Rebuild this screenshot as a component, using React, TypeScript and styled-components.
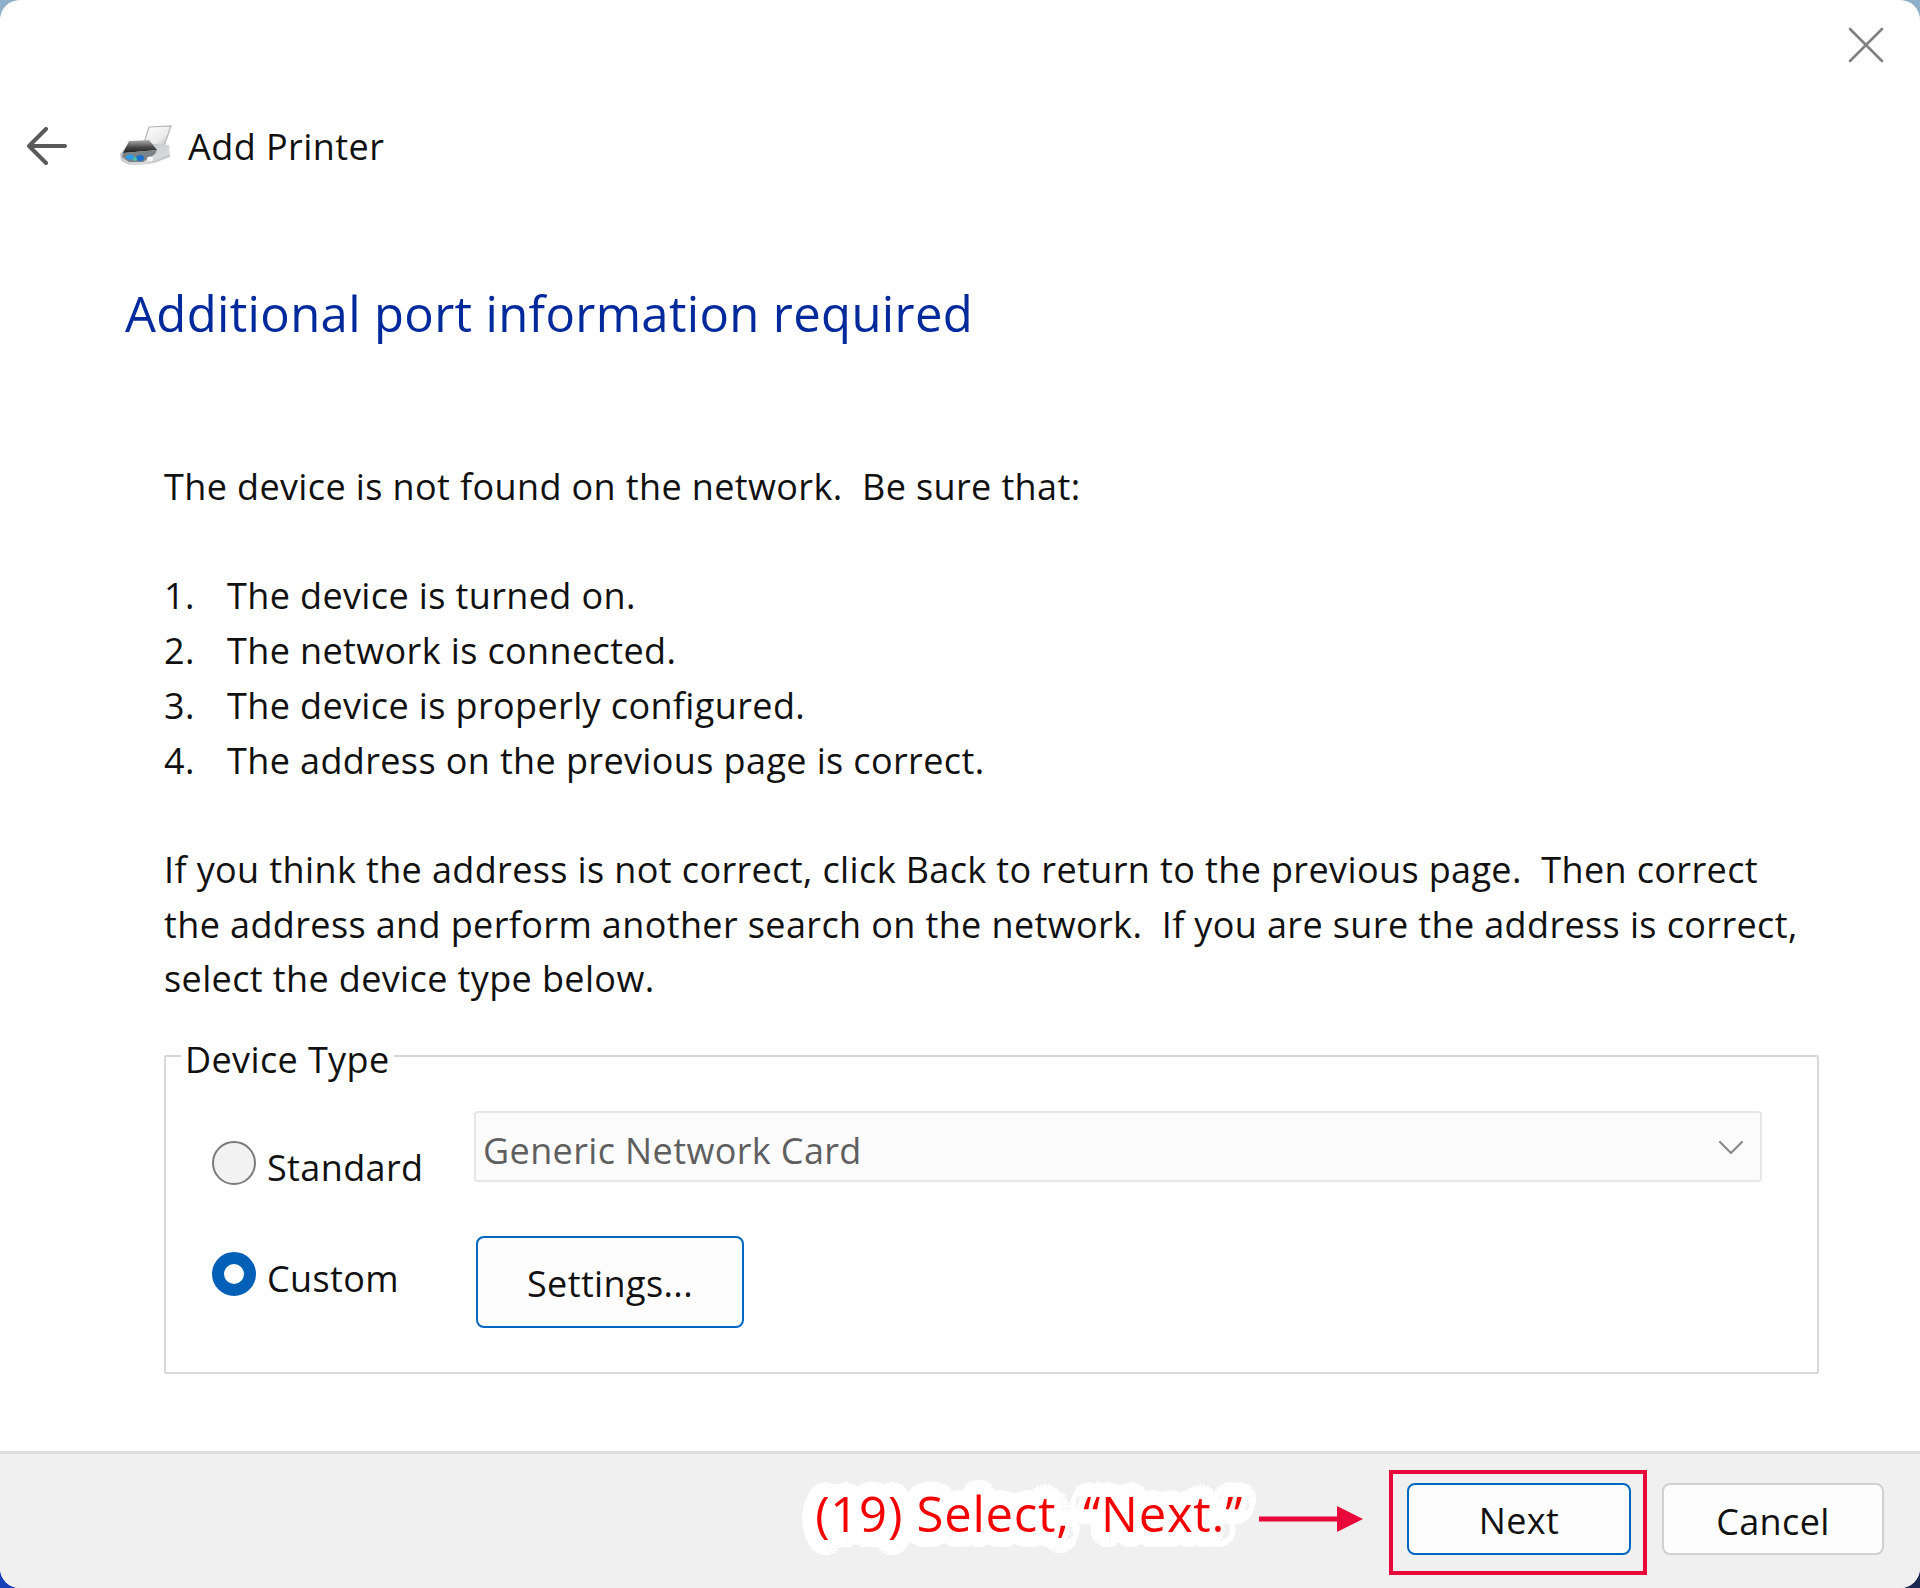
import React from 'react';
import styled, { createGlobalStyle } from 'styled-components';

const GlobalStyle = createGlobalStyle`
    html, body {
        margin: 0;
        padding: 0;
        background: #ffffff;
    }
`

// scalloped white halo around the annotation text
const haloRadius = 15;
const halo = Array.from({ length: 24 }, (_, i) => {
    const angle = (i / 24) * Math.PI * 2;
    return `${(Math.cos(angle) * haloRadius).toFixed(1)}px ${(Math.sin(angle) * haloRadius).toFixed(1)}px 0 #ffffff`;
}).join(', ');

const PrinterIcon: React.FC = () => (
    <svg width="54" height="44" viewBox="0 0 54 44">
        <defs>
            <linearGradient id="paper" x1="0" y1="0" x2="1" y2="1">
                <stop offset="0" stopColor="#ffffff" />
                <stop offset="0.6" stopColor="#ececec" />
                <stop offset="1" stopColor="#b8b8b8" />
            </linearGradient>
            <linearGradient id="band" x1="0" y1="0" x2="0" y2="1">
                <stop offset="0" stopColor="#b0b0b0" />
                <stop offset="0.55" stopColor="#4a4a4a" />
                <stop offset="1" stopColor="#1c1c1c" />
            </linearGradient>
            <linearGradient id="shell" x1="0" y1="0" x2="1" y2="1">
                <stop offset="0" stopColor="#b9bcbe" />
                <stop offset="0.7" stopColor="#d8dadb" />
                <stop offset="1" stopColor="#8f9497" />
            </linearGradient>
            <filter id="soft">
                <feGaussianBlur stdDeviation="0.5" />
            </filter>
        </defs>
        <g filter="url(#soft)">
            <path d="M30 3 L52 2 L45 22 L25 19 Z" fill="url(#paper)" stroke="#b5b5b5" strokeWidth="1.2" />
            <path d="M1 30 L8 22 L38 20 L50 21 L51 33 L35 39 L22 41 L10 41 L2 37 Z" fill="url(#shell)" />
            <path d="M10 17 L30 16 L38 26 L4 29 Z" fill="url(#band)" />
            <path d="M4 29 L38 26 L36 30 L24 38 L10 38 L3 33 Z" fill="#7b8388" />
            <ellipse cx="11" cy="33" rx="4" ry="2.6" fill="#2f9be8" />
            <ellipse cx="21" cy="34" rx="4" ry="3" fill="#1a6fd0" />
            <ellipse cx="16" cy="35" rx="2" ry="2" fill="#4cc4a4" />
            <ellipse cx="31" cy="35" rx="3" ry="2.4" fill="#f6f6f6" />
        </g>
    </svg>
)

const App: React.FC = () => {
    return (
        <Page>
            <GlobalStyle />
            <Dialog>
                <CloseRow>
                    <svg width="36" height="36" viewBox="0 0 36 36">
                        <path d="M2 2 L34 34 M34 2 L2 34" stroke="#808080" strokeWidth="2.6" strokeLinecap="round" />
                    </svg>
                </CloseRow>
                <Header>
                    <BackIcon>
                        <svg width="40" height="38" viewBox="0 0 40 38">
                            <path d="M38 19 L3 19 M19 2 L2 19 L19 36" fill="none" stroke="#5a5a5a" strokeWidth="4" strokeLinecap="round" strokeLinejoin="round" />
                        </svg>
                    </BackIcon>
                    <PrinterIcon />
                    <Title>Add Printer</Title>
                </Header>
                <Heading>Additional port information required</Heading>
                <Content>
                    <Paragraph>{'The device is not found on the network.  Be sure that:'}</Paragraph>
                    <Steps>
                        <Step><StepNumber>1.</StepNumber>The device is turned on.</Step>
                        <Step><StepNumber>2.</StepNumber>The network is connected.</Step>
                        <Step><StepNumber>3.</StepNumber>The device is properly configured.</Step>
                        <Step><StepNumber>4.</StepNumber>The address on the previous page is correct.</Step>
                    </Steps>
                    <Paragraph>
                        {'If you think the address is not correct, click Back to return to the previous page.  Then correct\nthe address and perform another search on the network.  If you are sure the address is correct,\nselect the device type below.'}
                    </Paragraph>
                    <DeviceType>
                        <Legend>Device Type</Legend>
                        <TypeRow>
                            <RadioLabel $offset={30}>
                                <Radio />
                                <RadioText>Standard</RadioText>
                            </RadioLabel>
                            <Select>
                                Generic Network Card
                                <Chevron width="26" height="16" viewBox="0 0 26 16">
                                    <path d="M2 2 L13 13 L24 2" fill="none" stroke="#8a8a8a" strokeWidth="2.2" strokeLinecap="round" strokeLinejoin="round" />
                                </Chevron>
                            </Select>
                        </TypeRow>
                        <TypeRow>
                            <RadioLabel $offset={16}>
                                <Radio $checked />
                                <RadioText>Custom</RadioText>
                            </RadioLabel>
                            <SettingsButton>Settings...</SettingsButton>
                        </TypeRow>
                    </DeviceType>
                </Content>
                <Footer>
                    <Annotation>(19) Select, “Next.”</Annotation>
                    <Arrow>
                        <svg width="104" height="30" viewBox="0 0 104 30">
                            <path d="M0 12.5 H78 V2 L104 15 L78 28 V17.5 H0 Z" fill="#e8083a" />
                        </svg>
                    </Arrow>
                    <Highlight>
                        <FooterButton $primary>Next</FooterButton>
                    </Highlight>
                    <FooterButton>Cancel</FooterButton>
                </Footer>
            </Dialog>
        </Page>
    )
}

export default App

interface IRadio {
    $checked?: boolean
}

interface IRadioLabel {
    $offset: number
}

interface IFooterButton {
    $primary?: boolean
}

const Page = styled.div`
    width: 1920px;
    height: 1588px;
    overflow: hidden;
    background:
        linear-gradient(90deg, #1640b8 50%, #1c2a52 50%) bottom / 100% 50% no-repeat,
        #8fb0ca;
    font-family: "Open Sans", "Noto Sans", sans-serif;
    color: #111111;
`

const Dialog = styled.div`
    height: 100%;
    display: flex;
    flex-direction: column;
    background: #ffffff;
    border-radius: 20px;
    overflow: hidden;
`

const CloseRow = styled.div`
    display: flex;
    justify-content: flex-end;
    padding: 27px 36px 0 0;
    height: 64px;
`

const Header = styled.div`
    display: flex;
    align-items: center;
    height: 56px;
    margin-top: 27px;
    padding-left: 27px;
`

const BackIcon = styled.div`
    display: flex;
    width: 92px;
`

const Title = styled.div`
    margin-left: 15px;
    font-size: 36px;
    letter-spacing: 0.45px;
`

const Heading = styled.h1`
    margin: 107px 0 0 125px;
    font-size: 49px;
    line-height: 64px;
    font-weight: 400;
    color: #002a9c;
    letter-spacing: 0.36px;
`

const Content = styled.div`
    margin-top: 115px;
    padding: 0 101px 0 164px;
    font-size: 36px;
    line-height: 54.7px;
    letter-spacing: 0.38px;
`

const Paragraph = styled.p`
    margin: 0;
    white-space: pre;
`

const Steps = styled.ol`
    list-style: none;
    margin: 54.7px 0;
    padding: 0;
`

const Step = styled.li`
    display: flex;
`

const StepNumber = styled.span`
    width: 63px;
`

const DeviceType = styled.fieldset`
    margin: 23px 0 0;
    padding: 29px 55px 0 46px;
    height: 344px;
    box-sizing: border-box;
    border: 2px solid #d8d8d8;
    border-radius: 2px;
`

const Legend = styled.legend`
    margin-left: -31px;
    padding: 8px 4px 0;
    line-height: 44px;
`

const TypeRow = styled.div`
    display: flex;
    margin-bottom: 41px;
`

const RadioLabel = styled.div<IRadioLabel>`
    width: 262px;
    flex: none;
    display: flex;
    align-items: flex-start;
    gap: 11px;
    margin-top: ${(props) => props.$offset}px;
`

const Radio = styled.span<IRadio>`
    width: 44px;
    height: 44px;
    box-sizing: border-box;
    flex: none;
    border-radius: 50%;
    border: ${(props) => props.$checked ? '12px solid #0060b8' : '2px solid #7a7a7a'};
    background: ${(props) => props.$checked ? '#ffffff' : '#f2f2f2'};
`

const RadioText = styled.span`
    line-height: 54px;
`

const Select = styled.div`
    flex: 1;
    height: 71px;
    box-sizing: border-box;
    display: flex;
    align-items: center;
    justify-content: space-between;
    padding: 9px 16px 0 7px;
    background: #fbfbfb;
    border: 2px solid #e6e6e6;
    border-radius: 4px;
    color: #5f5f5f;
`

const Chevron = styled.svg`
    margin-top: -6px;
`

const SettingsButton = styled.button`
    width: 268px;
    height: 92px;
    margin-left: 2px;
    padding-top: 5px;
    font: inherit;
    letter-spacing: inherit;
    color: #111111;
    background: #fdfdfd;
    border: 2.5px solid #0067c0;
    border-radius: 8px;
`

const Footer = styled.div`
    margin-top: auto;
    height: 137px;
    box-sizing: border-box;
    display: flex;
    align-items: center;
    justify-content: flex-end;
    padding: 0 36px 4px 0;
    background: #f0f0f0;
    border-top: 3px solid #dfdfdf;
`

const Annotation = styled.div`
    font-size: 49px;
    color: #f40000;
    white-space: pre;
    letter-spacing: 0.75px;
    text-shadow: ${halo};
    margin-bottom: 12px;
`

const Arrow = styled.div`
    display: flex;
    margin: 0 26px 0 16px;
`

const Highlight = styled.div`
    margin-top: 6px;
    padding: 9px 12px 16px 14px;
    border: 4px solid #e8083a;
`

const FooterButton = styled.button<IFooterButton>`
    display: block;
    width: ${(props) => props.$primary ? '224px' : '222px'};
    height: 72px;
    padding-top: 5px;
    font: inherit;
    font-size: 36px;
    letter-spacing: 0.4px;
    color: #111111;
    background: #fdfdfd;
    border-radius: 8px;
    border: ${(props) => props.$primary ? '2.5px solid #0067c0' : '2.5px solid #d0d0d0'};
    margin-left: ${(props) => props.$primary ? '0' : '15px'};
`
